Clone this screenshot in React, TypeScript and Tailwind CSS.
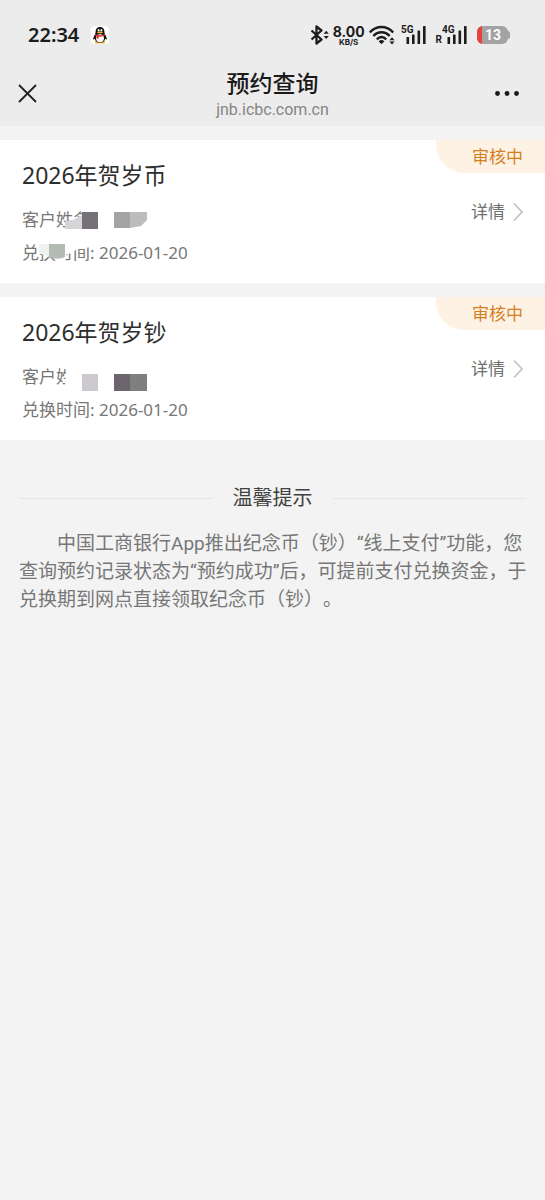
/**
 * Reservation lookup page — shows the status of each commemorative
 * coin / banknote booking, followed by a short notice.
 */

import type { ReactNode } from "react";

type Booking = {
  id: string;
  title: string;
  status: string;
  date: string;
  mask: ReactNode;
};

// Mosaic blocks that hide the customer's personal details.
const coinMask = (
  <>
    <path d="M43 18L51 17L66 9V26H43Z" fill="#d5d4d6" />
    <path d="M60 9H76V26H60Z" fill="#757176" />
    <path d="M92 9H108V25H92Z" fill="#a5a4a5" />
    <path d="M108 9H125V17L119 23L108 25Z" fill="#bdbcbd" />
    <path d="M17 38H70V44L55 46L50 50L43 52V57H33L26 51H17Z" fill="#fff" />
    <path d="M17 41H27V54L17 50Z" fill="#eff3ef" />
    <path d="M27 41H43V54Q38 57 27 55Z" fill="#b4bbb5" />
  </>
);

const noteMask = (
  <>
    <path d="M45 6H72V30H43V22Z" fill="#fff" />
    <path d="M60 14H76V31H60Z" fill="#cdcacf" />
    <path d="M92 14H108V31H92Z" fill="#6c656d" />
    <path d="M108 14H125V31H108Z" fill="#7e807e" />
  </>
);

const BOOKINGS: Booking[] = [
  {
    id: "coin",
    title: "2026年贺岁币",
    status: "审核中",
    date: "2026-01-20",
    mask: coinMask,
  },
  {
    id: "note",
    title: "2026年贺岁钞",
    status: "审核中",
    date: "2026-01-20",
    mask: noteMask,
  },
];

export default function App() {
  return (
    <div className="min-h-screen bg-[#f3f3f3] font-['Noto_Sans','Noto_Sans_CJK_SC',sans-serif]">
      <div className="bg-[#ececec]">
        <StatusBar />
        <NavBar />
      </div>

      <main>
        <ul className="mt-3.5 flex flex-col gap-3.5">
          {BOOKINGS.map((b) => (
            <BookingCard key={b.id} booking={b} />
          ))}
        </ul>
        <Notice />
      </main>
    </div>
  );
}

function StatusBar() {
  return (
    <div className="flex h-[70px] items-center justify-between pr-[35px] pl-7 text-[#1c1c1c]">
      <div className="flex items-center gap-3">
        <span className="text-[20px] font-semibold">22:34</span>
        <PenguinIcon />
      </div>
      <div className="flex items-center gap-1">
        <BluetoothIcon />
        <div className="flex flex-col items-center font-['Inter',sans-serif] font-bold">
          <span className="text-[14px] leading-[13px]">8.00</span>
          <span className="text-[8px] leading-[8px]">KB/S</span>
        </div>
        <WifiIcon />
        <div className="ml-0.5 flex items-center">
          <SignalIcon label="5G" />
        </div>
        <div className="ml-1.5 flex items-center">
          <SignalIcon label="4G" roaming />
        </div>
        <Battery level={13} />
      </div>
    </div>
  );
}

function NavBar() {
  return (
    <header className="grid h-14 grid-cols-[1fr_auto_1fr] items-start px-[18px]">
      <button type="button" aria-label="关闭" className="mt-3.5 justify-self-start">
        <svg width="19" height="19" viewBox="0 0 19 19" fill="none">
          <path d="M1 1L18 18M18 1L1 18" stroke="#222" strokeWidth="1.8" />
        </svg>
      </button>
      <div className="flex flex-col items-center">
        <h1 className="text-[23px] leading-[27px] font-medium text-[#1a1a1a]">
          预约查询
        </h1>
        <span className="font-['Roboto',sans-serif] text-[16px] leading-[26px] text-[#858585]">
          jnb.icbc.com.cn
        </span>
      </div>
      <button type="button" aria-label="更多" className="mt-3.5 mr-[7px] justify-self-end">
        <svg width="26" height="19" viewBox="0 0 26 19" fill="#1a1a1a">
          <circle cx="3.5" cy="9.5" r="2.4" />
          <circle cx="13" cy="9.5" r="2.4" />
          <circle cx="22.5" cy="9.5" r="2.4" />
        </svg>
      </button>
    </header>
  );
}

function BookingCard({ booking }: { booking: Booking }) {
  return (
    <li className="flex justify-between bg-white">
      <div className="pt-[18px] pb-3.5 pl-[22px]">
        <h2 className="text-[23px] leading-[34px] text-[#2e2e2e]">
          {booking.title}
        </h2>
        <div className="relative mt-[11px] text-[17px] leading-[33px] text-[#777]">
          <p>客户姓名</p>
          <p>兑换时间: {booking.date}</p>
          <svg
            aria-hidden="true"
            width="130"
            height="66"
            viewBox="0 0 130 66"
            className="absolute top-0 left-0"
          >
            {booking.mask}
          </svg>
        </div>
      </div>
      <div className="flex flex-col items-end text-[17px]">
        <span className="rounded-bl-[28px] bg-[#fef2e5] pr-[22px] pl-9 leading-[33px] text-[#d5801f]">
          {booking.status}
        </span>
        <a
          href="#"
          className="mt-7 mr-[22px] flex items-center gap-2 leading-[22px] text-[#707070]"
        >
          详情
          <svg width="10" height="20" viewBox="0 0 10 20" fill="none">
            <path d="M1 1.5L9 10L1 18.5" stroke="#c4c4c4" strokeWidth="1.8" />
          </svg>
        </a>
      </div>
    </li>
  );
}

function Notice() {
  return (
    <section className="mt-11 pr-4 pl-[19px]">
      <div className="mr-[3px] flex items-center gap-5">
        <span className="h-px flex-1 bg-[#e5e5e5]" />
        <h2 className="text-[20px] leading-7 text-[#404040]">温馨提示</h2>
        <span className="h-px flex-1 bg-[#e5e5e5]" />
      </div>
      <p className="mt-[18px] indent-[2em] font-['Roboto','Noto_Sans_CJK_SC',sans-serif] text-[19px] leading-7 text-[#777] [text-spacing-trim:space-all]">
        中国工商银行App推出纪念币（钞）“线上支付”功能，您查询预约记录状态为“预约成功”后，可提前支付兑换资金，于兑换期到网点直接领取纪念币（钞）。
      </p>
    </section>
  );
}

function PenguinIcon() {
  return (
    <svg width="18" height="18" viewBox="0 0 18 18" aria-hidden="true">
      <rect width="18" height="18" rx="4" fill="#fff" />
      <ellipse cx="6.3" cy="16.2" rx="2.6" ry="1.2" fill="#f5a623" />
      <ellipse cx="11.7" cy="16.2" rx="2.6" ry="1.2" fill="#f5a623" />
      <path
        d="M9 1C6.2 1 4.6 3 4.6 5.6C4.6 7 4.4 7.6 3.6 9C2.5 11 1.9 12.6 2.3 13.4C2.7 13.9 3.4 13 3.8 12.4C4 15 6 16.6 9 16.6S14 15 14.2 12.4C14.6 13 15.3 13.9 15.7 13.4C16.1 12.6 15.5 11 14.4 9C13.6 7.6 13.4 7 13.4 5.6C13.4 3 11.8 1 9 1Z"
        fill="#151515"
      />
      <ellipse cx="9" cy="12.2" rx="3.9" ry="3.9" fill="#fff" />
      <ellipse cx="7.6" cy="4.2" rx="0.9" ry="1.2" fill="#fff" />
      <ellipse cx="10.4" cy="4.2" rx="0.9" ry="1.2" fill="#fff" />
      <ellipse cx="9" cy="6.4" rx="2.9" ry="0.9" fill="#f5b12e" />
      <path
        d="M4.1 7.9Q9 10.4 13.9 7.9L14.3 9.3Q11 11 7.6 10.6V12.8L5.6 12.5V10.2L3.7 9.3Z"
        fill="#e02b2b"
      />
    </svg>
  );
}

function BluetoothIcon() {
  return (
    <svg width="19" height="20" viewBox="0 0 19 20" aria-hidden="true">
      <path
        d="M1.5 5.5L11.5 14.5L6.5 18.5V1.5L11.5 5.5L1.5 14.5"
        fill="none"
        stroke="currentColor"
        strokeWidth="2.3"
        strokeLinejoin="round"
      />
      <path d="M13.6 8.8L16.2 5.8L18.8 8.8ZM13.6 11L16.2 14L18.8 11Z" fill="currentColor" />
    </svg>
  );
}

function WifiIcon() {
  return (
    <svg width="26" height="20" viewBox="0 0 26 20" aria-hidden="true">
      <g fill="none" stroke="currentColor" strokeWidth="2.4">
        <path d="M0.8 7.5C7.5 0.2 17.5 0.2 24.2 7.5" />
        <path d="M4.3 11C9 6 16 6 20.7 11" />
        <path d="M7.8 14.3C10.7 11.3 14.3 11.3 17.2 14.3" />
      </g>
      <path d="M9.6 16.2Q12.5 13.6 15.4 16.2L12.5 19.2Z" fill="currentColor" />
      <path d="M20.4 15.2L23 12.2L25.6 15.2ZM20.4 16.6L23 19.6L25.6 16.6Z" fill="currentColor" />
    </svg>
  );
}

function SignalIcon({ label, roaming }: { label: string; roaming?: boolean }) {
  return (
    <>
      {roaming && (
        <span className="self-end font-['Roboto',sans-serif] text-[10px] leading-[10px] font-bold">
          R
        </span>
      )}
      <svg width="25" height="20" viewBox="0 0 25 20" fill="currentColor" role="img" aria-label={label}>
        <text x="0" y="8" className="font-['Roboto',sans-serif] text-[10px] font-bold">
          {label}
        </text>
        <rect x="5.5" y="12" width="2.6" height="7" rx="0.6" />
        <rect x="11" y="9.5" width="2.6" height="9.5" rx="0.6" />
        <rect x="16.5" y="5.5" width="2.6" height="13.5" rx="0.6" />
        <rect x="22" y="1" width="2.6" height="18" rx="0.6" />
      </svg>
    </>
  );
}

function Battery({ level }: { level: number }) {
  return (
    <div className="ml-1.5 flex items-center">
      <div className="flex h-[18px] w-[31px] items-center overflow-hidden rounded-[6px] bg-[#a3a3a3]">
        <span className="h-full w-[5px] bg-[#e5433a]" />
        <span className="flex-1 pr-1 text-center font-['Roboto',sans-serif] text-[14px] font-bold text-white">
          {level}
        </span>
      </div>
      <span className="h-2 w-0.5 rounded-r-full bg-[#a3a3a3]" />
    </div>
  );
}
